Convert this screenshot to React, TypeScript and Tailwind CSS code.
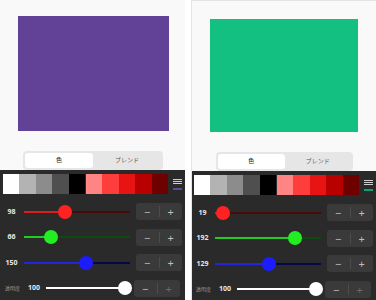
import React from 'react';

type Ch = { v: number; fill: string; rest: string; thumb: string };

const greys = ['#ffffff', '#b3b3b3', '#8c8c8c', '#4f4f4f', '#000000'];
const reds = ['#ff8585', '#ff3d3d', '#e81414', '#b80000', '#6e0000'];

function Slider({ v, max, fill, rest, thumb }: { v: number; max: number; fill: string; rest: string; thumb: string }) {
  const pct = (v / max) * 100;
  return (
    <div className="relative flex-1 h-[14px] flex items-center">
      <div className="w-full h-[2px] flex">
        <div style={{ width: `${pct}%`, background: fill }} />
        <div className="flex-1" style={{ background: rest }} />
      </div>
      <div
        className="absolute top-0 w-[14px] h-[14px] rounded-full -ml-[7px]"
        style={{ left: `${pct}%`, background: thumb }}
      />
    </div>
  );
}

function Stepper({ dim }: { dim?: boolean }) {
  return (
    <div className="w-[46px] h-[17px] rounded-[3px] bg-[#3a3a3a] flex items-center text-[11px] leading-none text-[#bdbdbd]">
      <span className="flex-1 text-center">−</span>
      <div className="w-px h-[11px] bg-[#4c4c4c]" />
      <span className={`flex-1 text-center ${dim ? 'text-[#6a6a6a]' : ''}`}>+</span>
    </div>
  );
}

function Panel({ color, accent, rgb, rectCls, segCls, padCls }: {
  color: string; accent: string; rgb: number[]; rectCls: string; segCls: string; padCls: string;
}) {
  const chans: Ch[] = [
    { v: rgb[0], fill: '#e01b1b', rest: '#4a0a0a', thumb: '#ff2222' },
    { v: rgb[1], fill: '#22cc22', rest: '#0d4a0d', thumb: '#22ee22' },
    { v: rgb[2], fill: '#2323e0', rest: '#06064a', thumb: '#1c1cff' },
  ];
  return (
    <div className="w-full flex flex-col">
      <div className="h-[173px] bg-[#f9f9f9] flex flex-col">
        <div className={rectCls} style={{ background: color }} />
        <div className={`${segCls} h-[19px] rounded-[4px] bg-[#e6e6e6] flex p-[2px] text-[6px] text-[#333]`}>
          <div className="flex-1 bg-white rounded-[3px] flex items-center justify-center font-medium">色</div>
          <div className="flex-1 flex items-center justify-center text-[#555]">ブレンド</div>
        </div>
      </div>
      <div className={`flex-1 bg-[#2a2a2a] pt-[4px] ${padCls}`}>
        <div className="flex items-center h-[20px]">
          {greys.map((c) => (
            <div key={c} className="flex-1 h-full" style={{ background: c }} />
          ))}
          <div className="w-px" />
          {reds.map((c) => (
            <div key={c} className="flex-1 h-full" style={{ background: c }} />
          ))}
          <div className="w-[15px] flex flex-col items-center justify-center gap-[1px] pl-[3px]">
            <div className="w-[9px] h-[1px] bg-[#cfcfcf]" />
            <div className="w-[9px] h-[1px] bg-[#cfcfcf]" />
            <div className="w-[9px] h-[1px] bg-[#cfcfcf]" />
            <div className="w-[9px] h-[2px] mt-[3px]" style={{ background: accent }} />
          </div>
        </div>
        <div className="mt-[5px] flex flex-col">
          {chans.map((c, i) => (
            <div key={i} className="h-[25.5px] flex items-center">
              <span className="w-[17px] text-center text-[7px] font-bold text-[#e8e8e8]">{c.v}</span>
              <div className="ml-[4px] w-[106px] flex">
                <Slider v={c.v} max={255} fill={c.fill} rest={c.rest} thumb={c.thumb} />
              </div>
              <div className="ml-[6px]">
                <Stepper />
              </div>
            </div>
          ))}
          <div className="h-[25.5px] flex items-center">
            <span className="ml-[2px] w-[20px] text-[5px] text-[#9a9a9a]">透明度</span>
            <span className="ml-[3px] w-[14px] text-[7px] font-bold text-[#e8e8e8]">100</span>
            <div className="ml-[4px] w-[79px] flex">
              <Slider v={100} max={100} fill="#ffffff" rest="#555" thumb="#ffffff" />
            </div>
            <div className="ml-[9px]">
              <Stepper dim />
            </div>
          </div>
        </div>
      </div>
    </div>
  );
}

export default function App() {
  return (
    <div
      className="w-[376px] h-[300px] bg-white flex overflow-hidden"
      style={{ fontFamily: '"Noto Sans", "Noto Sans CJK JP", sans-serif' }}
    >
      <div className="w-[185px] flex">
        <Panel
          color="#624296"
          accent="#5b4a9e"
          rgb={[98, 66, 150]}
          rectCls="ml-[18px] mt-[16px] w-[151px] h-[115px]"
          segCls="ml-[23px] mt-[20px] w-[140px]"
          padCls="pl-[3px] pr-[2px]"
        />
      </div>
      <div className="ml-[6px] w-[185px] flex border-l border-t border-[#e4e4e4]">
        <Panel
          color="#13c081"
          accent="#13a070"
          rgb={[19, 192, 129]}
          rectCls="ml-[18px] mt-[18px] w-[148px] h-[113px]"
          segCls="ml-[24px] mt-[20px] w-[137px]"
          padCls="pl-[2px] pr-[2px]"
        />
      </div>
    </div>
  );
}
